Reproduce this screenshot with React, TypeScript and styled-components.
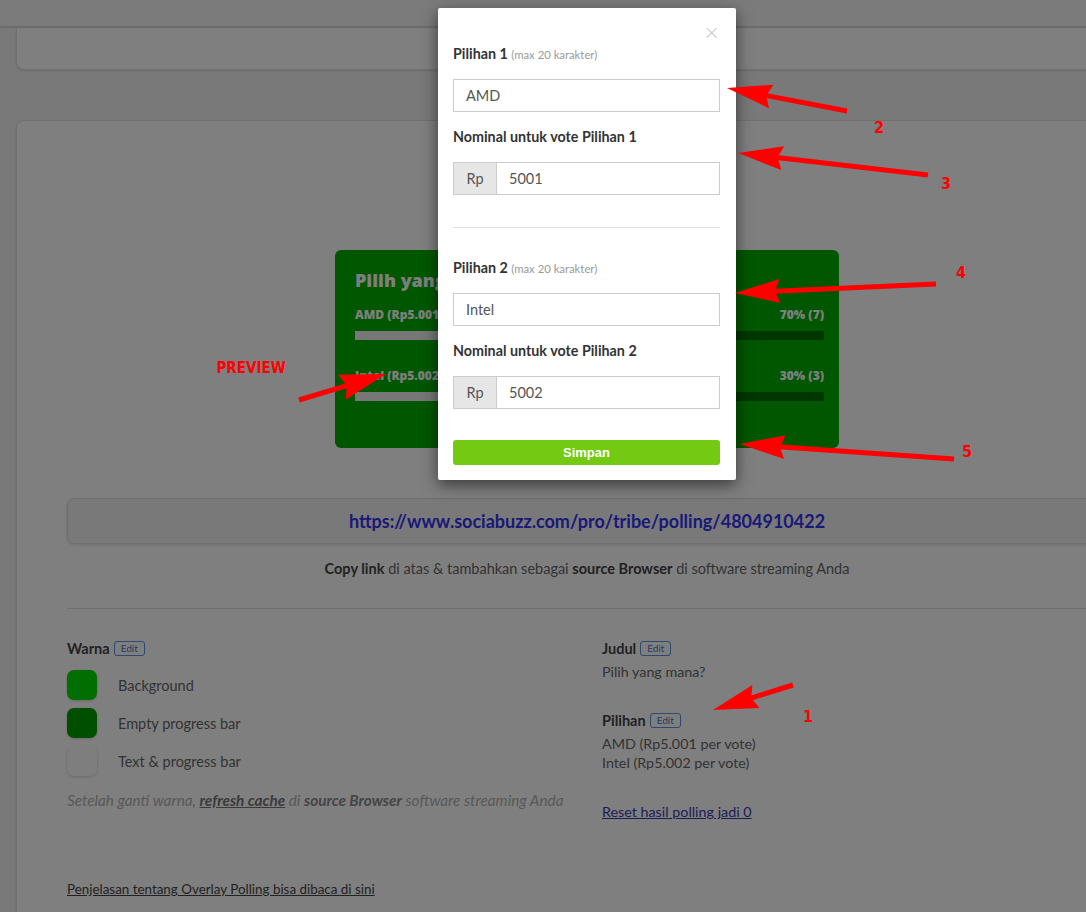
import React from 'react';
import styled, { createGlobalStyle } from 'styled-components';

const GlobalStyle = createGlobalStyle`
  * { box-sizing: border-box; }
  html, body { margin: 0; padding: 0; }
  body {
    background: #f3f3f3;
    font-family: Lato, 'Open Sans', sans-serif;
    color: #555;
    overflow: hidden;
  }
`

const Page = styled.div`
  position: relative;
  width: 1086px;
  height: 912px;
  overflow: hidden;
`

const TopBar = styled.div`
  height: 28px;
  background: #f6f6f6;
  border-bottom: 2px solid #dadada;
`

const Main = styled.div`
  width: 1142px;
  margin-left: 16px;
`

const TopCard = styled.div`
  height: 42px;
  background: #fff;
  border: 1px solid #e0e0e0;
  border-top: none;
  border-radius: 0 0 8px 8px;
  box-shadow: 0 1px 3px rgba(0, 0, 0, 0.1);
`

const Card = styled.div`
  margin-top: 50px;
  background: #fff;
  border: 1px solid #e0e0e0;
  border-radius: 8px;
  padding: 129px 50px 40px;
  box-shadow: 0 1px 3px rgba(0, 0, 0, 0.1);
`

/* preview of the polling overlay */
const Preview = styled.div`
  width: 504px;
  margin: 0 auto;
  background: #00ae00;
  border-radius: 6px;
  padding: 18px 15px 47px 20px;
  font-family: 'Open Sans', sans-serif;
  color: #fff;
`

const PreviewTitle = styled.div`
  font-size: 18px;
  font-weight: 800;
  line-height: 24px;
`

const PreviewRow = styled.div<{ $first?: boolean }>`
  margin-top: ${p => (p.$first ? '15px' : '28px')};
  display: flex;
  justify-content: space-between;
  font-size: 12px;
  font-weight: 800;
  line-height: 16px;
`

const Bar = styled.div`
  margin-top: 8px;
  height: 9px;
  background: #006c00;
`

const BarFill = styled.div`
  height: 100%;
  background: #eee;
`

const UrlBox = styled.div`
  margin-top: 50px;
  height: 46px;
  display: flex;
  align-items: center;
  justify-content: center;
  background: #f2f2f2;
  border: 1px solid #dedede;
  border-radius: 7px;
  box-shadow: 0 1px 3px rgba(0, 0, 0, 0.12);
  font-size: 18px;
  font-weight: 700;
  color: #3232f0;
`

const Hint = styled.p`
  margin: 16px 0 0;
  text-align: center;
  font-size: 14.5px;
  line-height: 18px;
  color: #666;

  b { color: #444; }
`

const Rule = styled.div`
  margin-top: 30px;
  height: 1px;
  background: #dcdcdc;
`

const Columns = styled.div`
  margin: 0 -15px;
  padding-top: 30px;
  display: grid;
  grid-template-columns: 1fr 1fr;
  align-items: start;
`

const Col = styled.div`
  padding: 0 15px;
`

const Heading = styled.div<{ $gap?: boolean }>`
  margin-top: ${p => (p.$gap ? '30px' : '0')};
  display: flex;
  align-items: center;
  gap: 4px;
  height: 18px;
  font-size: 14.5px;
  font-weight: 700;
  color: #444;
`

const EditBadge = styled.span`
  display: inline-flex;
  align-items: center;
  height: 15px;
  padding: 0 6px;
  border: 1px solid #5c92d6;
  border-radius: 3px;
  font-size: 10px;
  font-weight: 400;
  color: #3f78c6;
`

const Swatches = styled.div`
  margin-top: 13px;
  display: flex;
  flex-direction: column;
  gap: 8px;
`

const SwatchRow = styled.div`
  display: flex;
  align-items: center;
  gap: 21px;
  font-size: 14.5px;
  color: #666;
`

const Swatch = styled.div<{ $color: string }>`
  width: 30px;
  height: 30px;
  border-radius: 7px;
  background: ${p => p.$color};
  box-shadow: 0 1px 3px rgba(0, 0, 0, 0.18);
`

const Note = styled.p`
  margin: 15px 0 0;
  font-size: 15.3px;
  line-height: 18px;
  font-style: italic;
  color: #b0b0b0;

  b { color: #8a8a8a; }
  u { color: #777; font-weight: 700; }
`

const Text = styled.div<{ $top?: number }>`
  margin-top: ${p => p.$top ?? 0}px;
  font-size: 14.3px;
  line-height: 19px;
  color: #666;
`

const Link = styled.a<{ $dark?: boolean }>`
  display: inline-block;
  font-size: ${p => (p.$dark ? '13.4px' : '14.3px')};
  line-height: 19px;
  text-decoration: underline;
  color: ${p => (p.$dark ? '#444' : '#3a3ab0')};
`

const Footer = styled.div`
  margin-top: 57px;
`

const Backdrop = styled.div`
  position: absolute;
  inset: 0;
  background: rgba(0, 0, 0, 0.5);
`

/* modal */
const Modal = styled.div`
  position: absolute;
  top: 8px;
  left: 438px;
  width: 298px;
  background: #fff;
  border-radius: 2px;
  box-shadow: 0 5px 16px rgba(0, 0, 0, 0.55);
  padding: 37px 16px 15px 15px;
  font-family: Lato, sans-serif;
`

const Close = styled.span`
  position: absolute;
  top: 14px;
  right: 16px;
  font-size: 20px;
  line-height: 20px;
  color: #c8c8c8;
  font-family: 'DejaVu Sans', sans-serif;
  font-weight: 300;
`

const Label = styled.div<{ $top?: number }>`
  margin-top: ${p => p.$top ?? 0}px;
  font-size: 14.3px;
  font-weight: 700;
  line-height: 18px;
  color: #333;

  small {
    font-size: 11.3px;
    font-weight: 400;
    color: #999;
  }
`

const Field = styled.input`
  display: block;
  width: 100%;
  height: 33px;
  margin-top: 15px;
  padding: 0 12px;
  border: 1px solid #ccc;
  border-radius: 0;
  font-family: Lato, sans-serif;
  font-size: 14.5px;
  color: #555;
  outline: none;
`

const Group = styled.div`
  display: flex;
  height: 33px;
  margin-top: 16px;
`

const Addon = styled.span`
  width: 43px;
  display: flex;
  align-items: center;
  justify-content: center;
  background: #e6e6e6;
  border: 1px solid #ccc;
  border-right: none;
  font-size: 14.5px;
  color: #555;
`

const GroupField = styled(Field)`
  margin-top: 0;
  flex: 1;
  height: 100%;
`

const ModalRule = styled.div`
  margin-top: 32px;
  height: 1px;
  background: #ddd;
`

const SaveButton = styled.button`
  display: block;
  width: 100%;
  height: 25px;
  margin-top: 31px;
  border: none;
  border-radius: 3px;
  background: #74c912;
  color: #fff;
  font-family: 'Liberation Sans', Arial, sans-serif;
  font-size: 13px;
  font-weight: 700;
`

const Notes = styled.svg`
  position: absolute;
  inset: 0;
  pointer-events: none;
`

type ArrowProps = { x1: number; y1: number; x2: number; y2: number; len?: number; w?: number }

function Arrow({ x1, y1, x2, y2, len = 45, w = 12 }: ArrowProps) {
  const dx = x2 - x1
  const dy = y2 - y1
  const d = Math.hypot(dx, dy)
  const ux = dx / d
  const uy = dy / d
  const bx = x2 - ux * len
  const by = y2 - uy * len
  const pts = [
    [x2, y2],
    [bx - uy * w, by + ux * w],
    [bx + ux * 5, by + uy * 5],
    [bx + uy * w, by - ux * w],
  ].map(p => p.join(',')).join(' ')
  return (
    <g>
      <line x1={x1} y1={y1} x2={bx + ux * 6} y2={by + uy * 6} stroke="#ff0000" strokeWidth={5} />
      <polygon points={pts} fill="#ff0000" />
    </g>
  )
}

const noteFont = {
  fontFamily: "'DejaVu Sans Condensed', 'DejaVu Sans', sans-serif",
  fontWeight: 700,
  fill: '#ff0000',
}

function Annotations() {
  const nums: [string, number, number][] = [
    ['2', 879, 127],
    ['3', 946, 183],
    ['4', 961, 272],
    ['5', 967, 451],
    ['1', 808, 716],
  ]
  return (
    <Notes width="1086" height="912" viewBox="0 0 1086 912">
      <Arrow x1={847} y1={111} x2={727} y2={88} />
      <Arrow x1={928} y1={175} x2={738} y2={153} />
      <Arrow x1={936} y1={284} x2={735} y2={293} />
      <Arrow x1={954} y1={459} x2={740} y2={444} />
      <Arrow x1={793} y1={685} x2={713} y2={710} />
      <Arrow x1={299} y1={400} x2={386} y2={374} len={46} w={13} />
      {nums.map(([t, x, y]) => (
        <text key={t} x={x} y={y} textAnchor="middle" dominantBaseline="central" fontSize={16} {...noteFont}>
          {t}
        </text>
      ))}
      <text x={251} y={368} textAnchor="middle" dominantBaseline="central" fontSize={15} {...noteFont}>
        PREVIEW
      </text>
    </Notes>
  )
}

const options = [
  { name: 'AMD', price: 'Rp5.001', pct: 70, votes: 7 },
  { name: 'Intel', price: 'Rp5.002', pct: 30, votes: 3 },
]

export default function App() {
  return (
    <Page>
      <GlobalStyle />
      <TopBar />
      <Main>
        <TopCard />
        <Card>
          <Preview>
            <PreviewTitle>Pilih yang mana?</PreviewTitle>
            {options.map((o, i) => (
              <div key={o.name}>
                <PreviewRow $first={i === 0}>
                  <span>{o.name} ({o.price} per vote)</span>
                  <span>{o.pct}% ({o.votes})</span>
                </PreviewRow>
                <Bar>
                  <BarFill style={{ width: `${o.pct}%` }} />
                </Bar>
              </div>
            ))}
          </Preview>

          <UrlBox>https://www.sociabuzz.com/pro/tribe/polling/4804910422</UrlBox>
          <Hint>
            <b>Copy link</b> di atas &amp; tambahkan sebagai <b>source Browser</b> di software streaming Anda
          </Hint>
          <Rule />

          <Columns>
            <Col>
              <Heading>
                Warna <EditBadge>Edit</EditBadge>
              </Heading>
              <Swatches>
                <SwatchRow>
                  <Swatch $color="#00dc00" />
                  Background
                </SwatchRow>
                <SwatchRow>
                  <Swatch $color="#009e00" />
                  Empty progress bar
                </SwatchRow>
                <SwatchRow>
                  <Swatch $color="#fdfdfd" />
                  Text &amp; progress bar
                </SwatchRow>
              </Swatches>
              <Note>
                Setelah ganti warna, <u>refresh cache</u> di <b>source Browser</b> software streaming Anda
              </Note>
            </Col>
            <Col>
              <Heading>
                Judul <EditBadge>Edit</EditBadge>
              </Heading>
              <Text $top={5}>Pilih yang mana?</Text>
              <Heading $gap>
                Pilihan <EditBadge>Edit</EditBadge>
              </Heading>
              <Text $top={5}>AMD (Rp5.001 per vote)</Text>
              <Text>Intel (Rp5.002 per vote)</Text>
              <Text $top={30}>
                <Link>Reset hasil polling jadi 0</Link>
              </Text>
            </Col>
          </Columns>

          <Footer>
            <Link $dark>Penjelasan tentang Overlay Polling bisa dibaca di sini</Link>
          </Footer>
        </Card>
      </Main>

      <Backdrop />

      <Modal>
        <Close>×</Close>
        <Label>
          Pilihan 1 <small>(max 20 karakter)</small>
        </Label>
        <Field readOnly value="AMD" />
        <Label $top={16}>Nominal untuk vote Pilihan 1</Label>
        <Group>
          <Addon>Rp</Addon>
          <GroupField readOnly value="5001" />
        </Group>
        <ModalRule />
        <Label $top={31}>
          Pilihan 2 <small>(max 20 karakter)</small>
        </Label>
        <Field readOnly value="Intel" />
        <Label $top={16}>Nominal untuk vote Pilihan 2</Label>
        <Group>
          <Addon>Rp</Addon>
          <GroupField readOnly value="5002" />
        </Group>
        <SaveButton>Simpan</SaveButton>
      </Modal>

      <Annotations />
    </Page>
  )
}
